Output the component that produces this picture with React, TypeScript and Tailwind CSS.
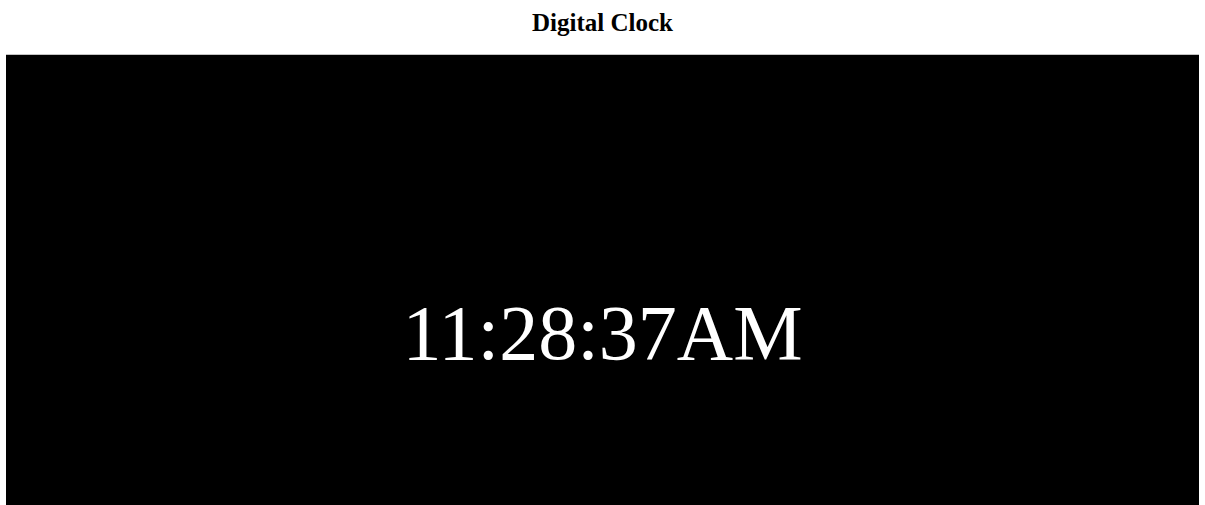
export default function App() {
  const time = "11:28:37AM";

  return (
    <div className="min-h-screen bg-white font-['Liberation_Serif','Times_New_Roman',serif]">
      <h2 className="pt-[9px] text-center text-[25px] font-bold leading-[28px] text-black">
        Digital Clock
      </h2>
      <div className="mx-[6px] mt-[17px] flex h-[556px] items-center justify-center border-t border-[#c4c4c4] bg-black">
        <span className="text-[78px] leading-[90px] text-white">{time}</span>
      </div>
    </div>
  );
}
